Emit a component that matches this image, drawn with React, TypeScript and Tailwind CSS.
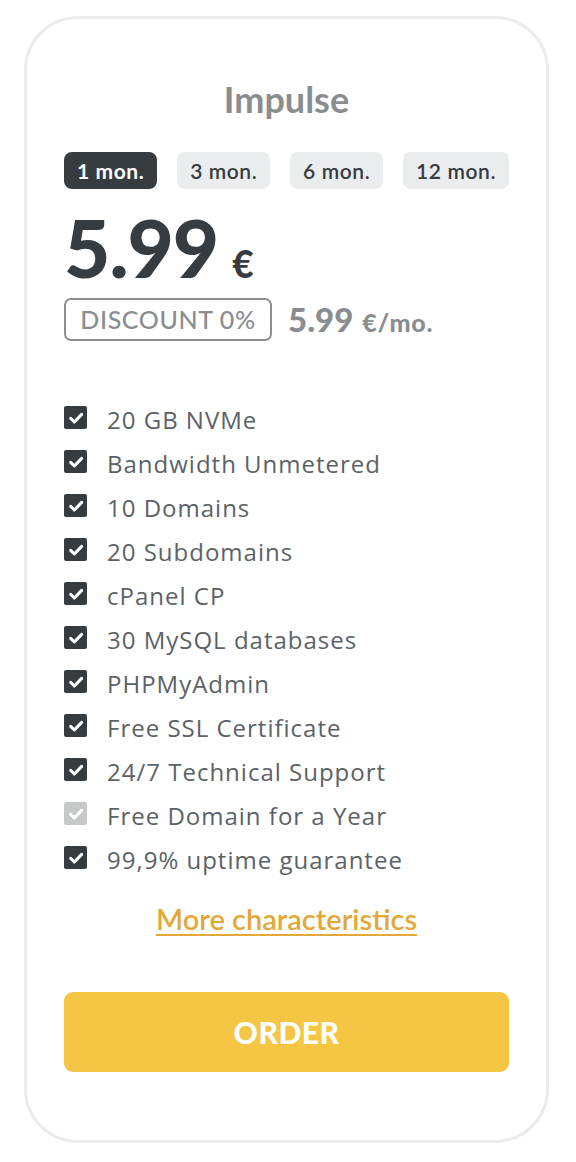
import React from "react";

const features: { label: string; on: boolean }[] = [
  { label: "20 GB NVMe", on: true },
  { label: "Bandwidth Unmetered", on: true },
  { label: "10 Domains", on: true },
  { label: "20 Subdomains", on: true },
  { label: "cPanel CP", on: true },
  { label: "30 MySQL databases", on: true },
  { label: "PHPMyAdmin", on: true },
  { label: "Free SSL Certificate", on: true },
  { label: "24/7 Technical Support", on: true },
  { label: "Free Domain for a Year", on: false },
  { label: "99,9% uptime guarantee", on: true },
];

function Check({ on }: { on: boolean }) {
  return (
    <span
      className={`mt-[8px] flex h-[23px] w-[23px] shrink-0 items-center justify-center rounded-[2px] ${
        on ? "bg-[#363c3f]" : "bg-[#c7c8c9]"
      }`}
    >
      <svg width="16" height="16" viewBox="0 0 24 24" fill="none">
        <path
          d="M4 12.5l5.5 5.5L20.5 6.5"
          stroke="white"
          strokeWidth="4.6"
          strokeLinecap="round"
          strokeLinejoin="round"
        />
      </svg>
    </span>
  );
}

export default function App() {
  const tabs = ["1 mon.", "3 mon.", "6 mon.", "12 mon."];
  return (
    <div
      className="min-h-[1162px] w-[576px] bg-white pt-4 leading-none"
      style={{ fontFamily: "Lato, 'Open Sans', sans-serif" }}
    >
      <div className="ml-6 w-[525px] rounded-[54px] border-[3px] border-[#ebebed] px-[37px] pb-[68px] pt-[62px]">
        <div className="text-center text-[36px] font-bold leading-[36px] text-[#8a8d8f]">Impulse</div>

        <div className="mt-[35px] flex justify-between">
          {tabs.map((t, i) => (
            <div
              key={t}
              className={`flex h-[37px] items-center justify-center rounded-[8px] px-[13px] text-[21px] leading-none tracking-[0.6px] ${
                i === 0 ? "bg-[#363c3f] font-bold text-white" : "bg-[#ebecee] font-semibold text-[#363c3f]"
              }`}
            >
              {t}
            </div>
          ))}
        </div>

        <div className="mt-[18px] flex h-[80px] items-baseline text-[#363c3f]">
          <span className="text-[80px] font-black leading-[80px] tracking-[-1px]">5.99</span>
          <span className="ml-[14px] text-[37px] font-black leading-[37px]">€</span>
        </div>

        <div className="mt-[11px] flex h-[43px] items-center">
          <div className="flex h-[43px] w-[208px] items-center justify-center rounded-[7px] border-2 border-[#8d9092] text-[25px] font-medium leading-none tracking-[0.6px] text-[#8a8d8f]">
            DISCOUNT 0%
          </div>
          <div className="ml-[16px] flex items-baseline leading-none text-[#8a8d8f]">
            <span className="text-[33px] font-black leading-none">5.99</span>
            <span className="ml-[9px] text-[25px] font-black leading-none tracking-[0.8px]">€/mo.</span>
          </div>
        </div>

        <ul className="mt-[57px]" style={{ fontFamily: "'Open Sans', Lato, sans-serif" }}>
          {features.map((f) => (
            <li key={f.label} className="flex h-[44px] items-start">
              <Check on={f.on} />
              <span className="ml-[20px] text-[24px] font-normal leading-[44px] tracking-[1px] text-[#5b6266]">
                {f.label}
              </span>
            </li>
          ))}
        </ul>

        <div className="mt-[22px] flex h-[29px] justify-center">
          <a
            href="#"
            className="text-[29px] font-semibold leading-[29px] text-[#e2a838] underline decoration-2 underline-offset-[4px]"
          >
            More characteristics
          </a>
        </div>

        <button className="mt-[59px] flex h-[80px] w-full items-center justify-center rounded-[9px] bg-[#f5c644] text-[30px] font-black leading-none tracking-[0.5px] text-white">
          ORDER
        </button>
      </div>
    </div>
  );
}
